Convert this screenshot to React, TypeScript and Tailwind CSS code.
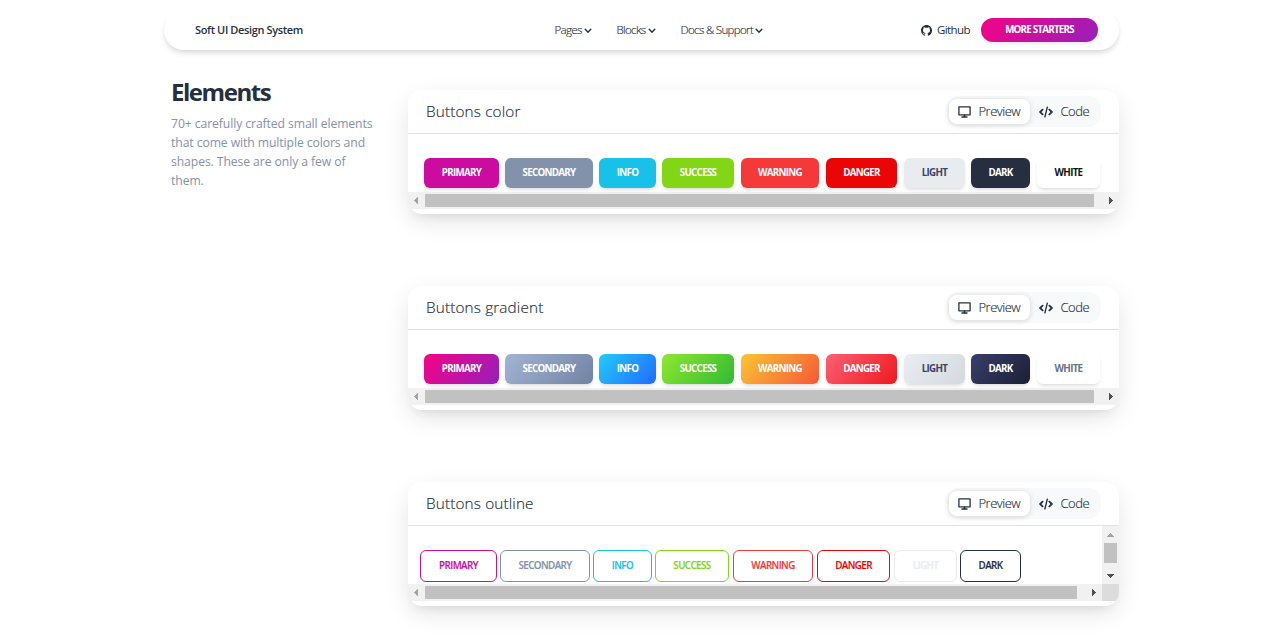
import type { ReactNode } from "react";

type ButtonSpec = { label: string; look: string };

const solid: ButtonSpec[] = [
  { label: "PRIMARY", look: "w-[75px] bg-[#cb0c9f] text-white" },
  { label: "SECONDARY", look: "ml-[6px] w-[88px] bg-[#8392ab] text-white" },
  { label: "INFO", look: "ml-[6px] w-[57px] bg-[#17c1e8] text-white" },
  { label: "SUCCESS", look: "ml-[6px] w-[72px] bg-[#82d616] text-white" },
  { label: "WARNING", look: "ml-[7px] w-[78px] bg-[#f53939] text-white" },
  { label: "DANGER", look: "ml-[7px] w-[71px] bg-[#ea0606] text-white" },
  { label: "LIGHT", look: "ml-[7px] w-[61px] bg-[#e9ecef] text-[#3a416f]" },
  { label: "DARK", look: "ml-[6px] w-[59px] bg-[#252f40] text-white" },
  { label: "WHITE", look: "ml-[7px] w-[63px] bg-white text-[#141414]" },
];

const gradient: ButtonSpec[] = [
  { label: "PRIMARY", look: "w-[75px] bg-[linear-gradient(310deg,#7928ca,#ff0080)] text-white" },
  { label: "SECONDARY", look: "ml-[6px] w-[88px] bg-[linear-gradient(310deg,#627594,#a8b8d8)] text-white" },
  { label: "INFO", look: "ml-[6px] w-[57px] bg-[linear-gradient(310deg,#2152ff,#21d4fd)] text-white" },
  { label: "SUCCESS", look: "ml-[6px] w-[72px] bg-[linear-gradient(310deg,#17ad37,#98ec2d)] text-white" },
  { label: "WARNING", look: "ml-[7px] w-[78px] bg-[linear-gradient(310deg,#f53939,#fbcf33)] text-white" },
  { label: "DANGER", look: "ml-[7px] w-[71px] bg-[linear-gradient(310deg,#ea0606,#ff667c)] text-white" },
  { label: "LIGHT", look: "ml-[7px] w-[61px] bg-[linear-gradient(310deg,#ced4da,#ebeff4)] text-[#3a416f]" },
  { label: "DARK", look: "ml-[6px] w-[59px] bg-[linear-gradient(310deg,#141727,#3a416f)] text-white" },
  { label: "WHITE", look: "ml-[7px] w-[63px] bg-white text-[#67748e]" },
];

const outline: ButtonSpec[] = [
  { label: "PRIMARY", look: "w-[77px] text-[#cb0c9f]" },
  { label: "SECONDARY", look: "ml-[3px] w-[90px] text-[#8392ab]" },
  { label: "INFO", look: "ml-[3px] w-[59px] text-[#17c1e8]" },
  { label: "SUCCESS", look: "ml-[3px] w-[74px] text-[#82d616]" },
  { label: "WARNING", look: "ml-[4px] w-[80px] text-[#f53939]" },
  { label: "DANGER", look: "ml-[4px] w-[73px] text-[#ea0606]" },
  { label: "LIGHT", look: "ml-[4px] w-[63px] text-[#e9ecef]" },
  { label: "DARK", look: "ml-[3px] w-[61px] text-[#252f40]" },
];

function Triangle({ className, points }: { className: string; points: string }) {
  return (
    <svg className={className} viewBox="0 0 17 17" width="17" height="17" shapeRendering="crispEdges">
      <polygon points={points} fill="currentColor" />
    </svg>
  );
}

function HorizontalBar({ thumb }: { thumb: string }) {
  return (
    <div className="flex h-[17px] items-center bg-[#f1f1f1]">
      <Triangle className="shrink-0 text-[#a3a3a3]" points="10,5 10,12 6,8.5" />
      <div className={"h-[13px] bg-[#c1c1c1] " + thumb} />
      <Triangle className="ml-auto shrink-0 text-[#505050]" points="7,4.5 7,12.5 11,8.5" />
    </div>
  );
}

function VerticalBar() {
  return (
    <div className="flex w-[17px] shrink-0 flex-col items-center bg-[#f1f1f1]">
      <Triangle className="shrink-0 text-[#a3a3a3]" points="5,11 12,11 8.5,7" />
      <div className="h-5 w-[13px] bg-[#c1c1c1]" />
      <Triangle className="mt-auto shrink-0 text-[#505050]" points="4.5,7 12.5,7 8.5,11" />
    </div>
  );
}

function Card({ title, children }: { title: string; children: ReactNode }) {
  return (
    <section className="h-[124px] overflow-hidden rounded-[14px] bg-white shadow-[0_8px_26px_-4px_rgba(20,20,20,0.15),0_8px_9px_-5px_rgba(20,20,20,0.06)]">
      <header className="flex h-11 items-center justify-between border-b border-[#dee2e6] pr-[18px] pl-[18px]">
        <h2 className="text-[15.3px] font-light tracking-[0.15px] text-[#252f40] [-webkit-text-stroke:0.15px_#252f40]">{title}</h2>
        <div className="flex h-[31px] w-[154px] items-center rounded-xl bg-[#f8f9fa] pl-[2px] text-[13px] font-light tracking-[-0.5px] text-[#252f40]">
          <div className="flex h-[25px] w-[81px] shrink-0 items-center rounded-lg bg-white pl-[9px] shadow-[0_1px_5px_1px_#ddd]">
            <svg className="shrink-0" width="13" height="12" viewBox="0 0 13 12" fill="none" stroke="#252f40">
              <path d="M.9.9h11.2v7.9H.9z" strokeWidth="1.3" strokeLinejoin="round" />
              <path d="M3.5 11h6M6.5 8.8v2" strokeWidth="1.6" />
            </svg>
            <span className="ml-[7.5px] [-webkit-text-stroke:0.15px_#252f40]">Preview</span>
          </div>
          <div className="flex shrink-0 items-center pl-[9px]">
            <svg className="shrink-0" width="14" height="12" viewBox="0 0 14 12" fill="none" stroke="#252f40" strokeWidth="1.8" strokeLinecap="round" strokeLinejoin="round">
              <path d="M3.6 3.6L1.1 6l2.5 2.4M10.4 3.6L12.9 6l-2.5 2.4" />
              <path d="M8.3 1.1L5.9 10.9" strokeWidth="1.4" />
            </svg>
            <span className="ml-[7.5px] [-webkit-text-stroke:0.15px_#252f40]">Code</span>
          </div>
        </div>
      </header>
      {children}
    </section>
  );
}

function FilledRow({ items }: { items: ButtonSpec[] }) {
  return (
    <>
      <div className="flex h-[58px] pt-6 pl-4">
        {items.map((b) => (
          <button
            key={b.label}
            className={
              "h-[30px] shrink-0 rounded-md bg-size-[150%] bg-position-[25%] text-center text-[9.8px] leading-[30px] font-bold tracking-[-0.72px] shadow-[0_3px_5px_-1px_rgba(0,0,0,0.09),0_2px_3px_-1px_rgba(0,0,0,0.07)] " +
              b.look
            }
          >
            {b.label}
          </button>
        ))}
      </div>
      <HorizontalBar thumb="w-[669px]" />
    </>
  );
}

function NavItem({ label, place }: { label: string; place: string }) {
  return (
    <a className={"flex items-center whitespace-nowrap " + place}>
      <span className="[-webkit-text-stroke:0.15px_#252f40]">{label}</span>
      <svg className="mt-px ml-[2px] shrink-0" width="8" height="6" viewBox="0 0 8 6" fill="none" stroke="#252f40" strokeWidth="1.4" strokeLinecap="round">
        <path d="M1.2 1.2l2.8 3 2.8-3" />
      </svg>
    </a>
  );
}

export default function App() {
  return (
    <div className="h-[640px] overflow-hidden bg-white pt-[10px] font-['Open_Sans',sans-serif] text-[#252f40]">
      <nav className="ml-[164px] flex h-10 w-[955px] items-center rounded-full bg-white pr-[21px] pl-[31px] text-[11.5px] shadow-[0_4px_6px_-1px_rgba(20,20,20,0.12),0_2px_4px_-1px_rgba(20,20,20,0.07)]">
        <a className="w-[359px] text-[11px] font-semibold tracking-[-0.37px]">Soft UI Design System</a>
        <div className="flex w-[367px] pl-[0.5px] font-light tracking-[-0.65px]">
          <NavItem label="Pages" place="w-[62px]" />
          <NavItem label="Blocks" place="w-[64px]" />
          <NavItem label="Docs & Support" place="w-[100px]" />
        </div>
        <a className="flex w-[60px] items-center tracking-[-0.6px]">
          <svg width="11" height="11" viewBox="0 0 16 16" fill="#252f40">
            <path d="M8 0C3.58 0 0 3.58 0 8c0 3.54 2.29 6.53 5.47 7.59.4.07.55-.17.55-.38 0-.19-.01-.82-.01-1.49-2.01.37-2.53-.49-2.69-.94-.09-.23-.48-.94-.82-1.13-.28-.15-.68-.52-.01-.53.63-.01 1.08.58 1.23.82.72 1.21 1.87.87 2.33.66.07-.52.28-.87.51-1.07-1.78-.2-3.64-.89-3.64-3.95 0-.87.31-1.59.82-2.15-.08-.2-.36-1.02.08-2.12 0 0 .67-.21 2.2.82a7.6 7.6 0 0 1 4 0c1.53-1.04 2.2-.82 2.2-.82.44 1.1.16 1.92.08 2.12.51.56.82 1.27.82 2.15 0 3.07-1.87 3.75-3.65 3.95.29.25.54.73.54 1.48 0 1.07-.01 1.93-.01 2.2 0 .21.15.46.55.38A8 8 0 0 0 16 8c0-4.42-3.58-8-8-8z" />
          </svg>
          <span className="ml-[5px]">Github</span>
        </a>
        <button className="h-6 w-[117px] shrink-0 rounded-full bg-[linear-gradient(310deg,#7928ca,#ff0080)] bg-size-[150%] bg-position-[25%] text-[9.8px] font-bold tracking-[-0.78px] text-white shadow-[0_3px_5px_-1px_rgba(0,0,0,0.09)]">
          MORE STARTERS
        </button>
      </nav>

      <main className="flex pt-10 pl-[171px]">
        <aside className="-mt-[14px] w-[237px] shrink-0">
          <h1 className="text-[24px] leading-8 font-bold tracking-[-1.45px]">Elements</h1>
          <p className="mt-[6px] w-[206px] text-[12.2px] leading-[19px] tracking-[-0.09px] text-[#8392ab]">
            70+ carefully crafted small elements that come with multiple colors and shapes. These are only a few of them.
          </p>
        </aside>
        <div className="flex w-[711px] flex-col gap-[72px]">
          <Card title="Buttons color">
            <FilledRow items={solid} />
          </Card>
          <Card title="Buttons gradient">
            <FilledRow items={gradient} />
          </Card>
          <Card title="Buttons outline">
            <div className="flex h-[58px]">
              <div className="flex flex-1 pt-6 pl-3">
                {outline.map((b) => (
                  <button
                    key={b.label}
                    className={
                      "h-8 shrink-0 rounded-md border border-current text-center text-[9.8px] leading-[30px] font-semibold tracking-[-0.58px] [-webkit-text-stroke:0.15px] " +
                      b.look
                    }
                  >
                    {b.label}
                  </button>
                ))}
              </div>
              <VerticalBar />
            </div>
            <div className="flex bg-[#dcdcdc]">
              <div className="w-[694px]">
                <HorizontalBar thumb="w-[652px]" />
              </div>
            </div>
          </Card>
        </div>
      </main>
    </div>
  );
}
